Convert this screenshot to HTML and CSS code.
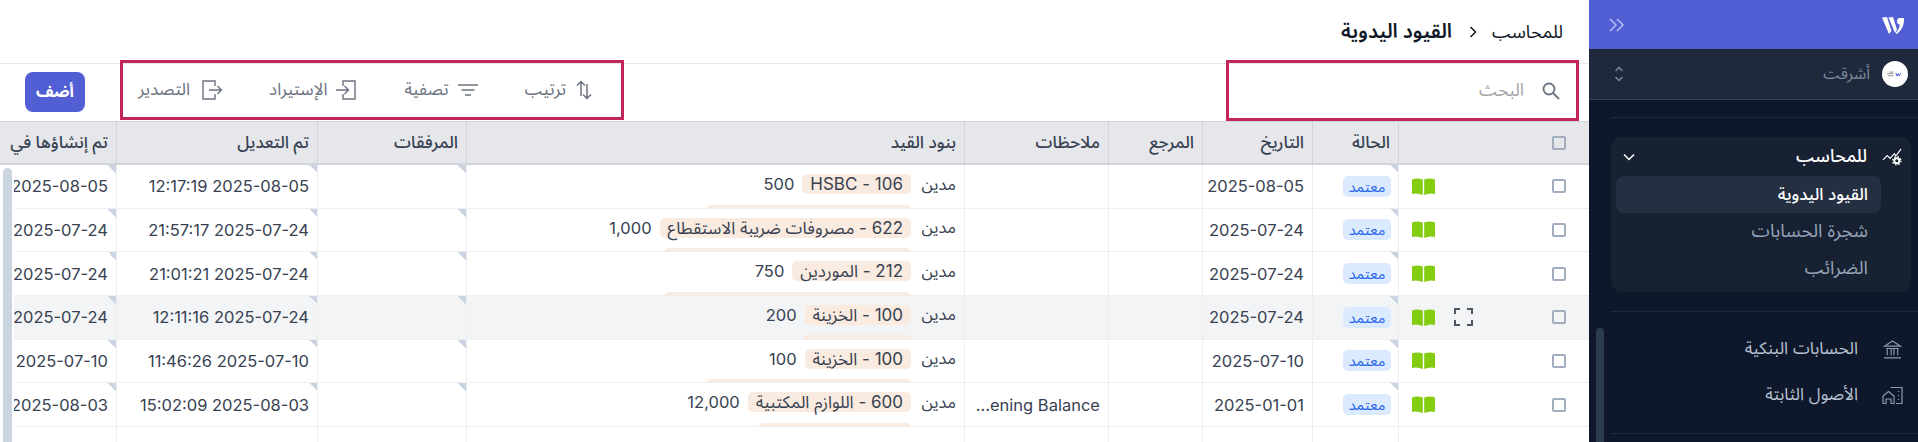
FILE: index.html
```html
<!DOCTYPE html>
<html lang="ar" dir="rtl">

<head>
    <meta charset="UTF-8">
    <title>القيود اليدوية</title>
    <link rel="stylesheet" href="styles.css">
</head>

<body>
    <div class="app">
        <aside class="sidebar">
            <div class="brand">
                <svg class="logo" viewBox="0 0 22 18"><path d="M0 1.500 5 1 9.500 15 7 18ZM6.500 1.500 11 1 15 13.500 13 17ZM15 5.500a3 3 0 0 1 3-3.500h4c.3 6-1.500 12-7.500 16l-1-1c2.500-2.500 4-5 4.300-8.500-1.500.4-2.500-1-2.800-3Z" fill="#fff"/></svg>
                <svg class="collapse" viewBox="0 0 16 14" fill="none" stroke="#b4bcf0" stroke-width="1.500"><path d="M1 1l6 6-6 6M8 1l6 6-6 6"/></svg>
            </div>
            <div class="company">
                <span class="avatar">
                    <svg viewBox="0 0 20 8"><path d="M0 3h8M1 5.500h7M3 1h5" stroke="#777" stroke-width="1" fill="none"/><path d="M11 2l1.500 4 1.500-3 1.500 3 1.500-4" stroke="#4f5bd5" stroke-width="1.200" fill="none"/></svg>
                </span>
                <span class="companyName">أشرقت</span>
                <svg class="updown" viewBox="0 0 10 16" fill="none" stroke="#7c8aa0" stroke-width="1.500"><path d="M1.500 5 5 1.500 8.500 5M1.500 11 5 14.500 8.500 11"/></svg>
            </div>
            <nav class="nav">
                <div class="sep"></div>
                <div class="group">
                    <div class="groupHead">
                        <svg class="navIcon" viewBox="0 0 22 18" fill="none" stroke="#fff" stroke-width="1.200"><path d="M1 12.500 5.500 8l3 3L13 6l1.500 2.500L20 1"/><circle cx="15.500" cy="13.500" r="2.600" stroke-width="2"/><circle cx="15.500" cy="13.500" r="4.300" stroke-width="1.400" stroke-dasharray="1.700 1.700"/></svg>
                        <span class="groupTitle">للمحاسب</span>
                        <svg class="groupArrow" viewBox="0 0 12 8" fill="none" stroke="#fff" stroke-width="1.500"><path d="M1 1.500 6 6.500 11 1.500"/></svg>
                    </div>
                    <a class="subItem active">القيود اليدوية</a>
                    <a class="subItem">شجرة الحسابات</a>
                    <a class="subItem">الضرائب</a>
                </div>
                <div class="sep sepMiddle"></div>
                <a class="navItem">
                    <svg class="navIcon" viewBox="0 0 20 20" fill="none" stroke="#8a9ab0" stroke-width="1.200"><path d="M1.500 6.500 10 1l8.500 5.500ZM3.500 9h13M4.500 9v7M8.500 9v7M11.500 9v7M15.500 9v7M1 18.800h18"/></svg>
                    <span>الحسابات البنكية</span>
                </a>
                <a class="navItem">
                    <svg class="navIcon" viewBox="0 0 21 18" fill="none" stroke="#8a9ab0" stroke-width="1.200"><path d="M1 17V9.500L6.500 5l5.500 4.500V17H9v-4.500H4V17ZM8.500 1H20v16h-6M16.500 4.500v1M16.500 8.500v1M16.500 12.500v1"/></svg>
                    <span>الأصول الثابتة</span>
                </a>
                <div class="sep sepLast"></div>
                <div class="navScroll"></div>
            </nav>
        </aside>

        <main class="main">
            <header class="topBar">
                <span class="crumb">للمحاسب</span>
                <svg class="crumbArrow" viewBox="0 0 8 12" fill="none" stroke="#111827" stroke-width="1.500"><path d="M1.500 1 6.500 6 1.500 11"/></svg>
                <span class="pageTitle">القيود اليدوية</span>
            </header>

            <div class="toolbar">
                <div class="search">
                    <svg class="searchIcon" viewBox="0 0 18 18" fill="none" stroke="#6b7280" stroke-width="1.800"><circle cx="7" cy="7" r="5.500"/><path d="M11 11l6 6"/></svg>
                    <span class="placeholder">البحث</span>
                </div>
                <div class="actions">
                    <a class="action sortAction">
                        <svg viewBox="0 0 16 20" fill="none" stroke="#6b7280" stroke-width="1.500" class="actionIcon"><path d="M5 16V2M1 5.500 5 1.500l4 4M11 4v14M7 14.500l4 4 4-4"/></svg>
                        <span>ترتيب</span>
                    </a>
                    <a class="action filterAction">
                        <svg viewBox="0 0 20 14" fill="none" stroke="#6b7280" stroke-width="1.700" class="actionIcon iconWide"><path d="M0 2h20M3.500 7h13M7 12h6"/></svg>
                        <span>تصفية</span>
                    </a>
                    <a class="action importAction">
                        <svg viewBox="0 0 20 20" fill="none" stroke="#6b7280" stroke-width="1.400" class="actionIcon iconWide"><path d="M7 6V1h12v18H7v-5M0 10h12M8.500 6l4 4-4 4"/></svg>
                        <span>الإستيراد</span>
                    </a>
                    <a class="action exportAction">
                        <svg viewBox="0 0 20 20" fill="none" stroke="#6b7280" stroke-width="1.400" class="actionIcon iconWide"><path d="M13 6V1H1v18h12v-5M7 10h12M15.500 6l4 4-4 4"/></svg>
                        <span>التصدير</span>
                    </a>
                </div>
                <button class="addButton">أضف</button>
            </div>

            <div class="tableWrap">
                <table class="entries">
                    <colgroup>
                        <col class="colCheck"><col class="colStatus"><col class="colDate"><col class="colRef"><col class="colNotes"><col class="colLines"><col class="colFiles"><col class="colModified"><col class="colCreated">
                    </colgroup>
                    <thead>
                        <tr>
                            <th><span class="check"></span></th>
                            <th>الحالة</th>
                            <th>التاريخ</th>
                            <th>المرجع</th>
                            <th>ملاحظات</th>
                            <th>بنود القيد</th>
                            <th>المرفقات</th>
                            <th>تم التعديل</th>
                            <th>تم إنشاؤها في</th>
                        </tr>
                    </thead>
                    <tbody>
                        <tr>
                            <td><div class="rowTools"><span class="check"></span><svg class="book" viewBox="0 0 23 17"><path d="M0 1.500Q5-.5 10.800 1.500V17Q5 14.500 0 16ZM12.200 1.500Q18-.5 23 1.500V16Q18 14.500 12.200 17Z"/></svg></div></td>
                            <td class="flag"><span class="status">معتمد</span></td>
                            <td>2025-08-05</td>
                            <td></td>
                            <td></td>
                            <td>
                                <div class="lines">
                                    <div class="line"><span class="side">مدين</span><span class="account">106 - HSBC</span><span>500</span></div>
                                    <div class="line"><span class="side"></span><span class="account cut205"></span></div>
                                </div>
                            </td>
                            <td class="flag"></td>
                            <td class="flag">2025-08-05 12:17:19</td>
                            <td class="flag">2025-08-05</td>
                        </tr>
                        <tr>
                            <td><div class="rowTools"><span class="check"></span><svg class="book" viewBox="0 0 23 17"><path d="M0 1.500Q5-.5 10.800 1.500V17Q5 14.500 0 16ZM12.200 1.500Q18-.5 23 1.500V16Q18 14.500 12.200 17Z"/></svg></div></td>
                            <td class="flag"><span class="status">معتمد</span></td>
                            <td>2025-07-24</td>
                            <td></td>
                            <td></td>
                            <td>
                                <div class="lines">
                                    <div class="line"><span class="side">مدين</span><span class="account">622 - مصروفات ضريبة الاستقطاع</span><span>1,000</span></div>
                                    <div class="line"><span class="side"></span><span class="account cut247"></span></div>
                                </div>
                            </td>
                            <td class="flag"></td>
                            <td class="flag">2025-07-24 21:57:17</td>
                            <td class="flag">2025-07-24</td>
                        </tr>
                        <tr>
                            <td><div class="rowTools"><span class="check"></span><svg class="book" viewBox="0 0 23 17"><path d="M0 1.500Q5-.5 10.800 1.500V17Q5 14.500 0 16ZM12.200 1.500Q18-.5 23 1.500V16Q18 14.500 12.200 17Z"/></svg></div></td>
                            <td class="flag"><span class="status">معتمد</span></td>
                            <td>2025-07-24</td>
                            <td></td>
                            <td></td>
                            <td>
                                <div class="lines">
                                    <div class="line"><span class="side">مدين</span><span class="account">212 - الموردين</span><span>750</span></div>
                                    <div class="line"><span class="side"></span><span class="account cut247"></span></div>
                                </div>
                            </td>
                            <td class="flag"></td>
                            <td class="flag">2025-07-24 21:01:21</td>
                            <td class="flag">2025-07-24</td>
                        </tr>
                        <tr class="hovered">
                            <td>
                                <div class="rowTools">
                                    <span class="check"></span>
                                    <svg class="expand" viewBox="0 0 19 18" fill="none" stroke="#4b5563" stroke-width="2"><path d="M1 6V1h5M13 1h5v5M18 12v5h-5M6 17H1v-5"/></svg>
                                    <svg class="book" viewBox="0 0 23 17"><path d="M0 1.500Q5-.5 10.800 1.500V17Q5 14.500 0 16ZM12.200 1.500Q18-.5 23 1.500V16Q18 14.500 12.200 17Z"/></svg>
                                </div>
                            </td>
                            <td class="flag"><span class="status">معتمد</span></td>
                            <td>2025-07-24</td>
                            <td></td>
                            <td></td>
                            <td>
                                <div class="lines">
                                    <div class="line"><span class="side">مدين</span><span class="account">100 - الخزينة</span><span>200</span></div>
                                    <div class="line"><span class="side"></span><span class="account cut108"></span></div>
                                </div>
                            </td>
                            <td class="flag"></td>
                            <td class="flag">2025-07-24 12:11:16</td>
                            <td class="flag">2025-07-24</td>
                        </tr>
                        <tr>
                            <td><div class="rowTools"><span class="check"></span><svg class="book" viewBox="0 0 23 17"><path d="M0 1.500Q5-.5 10.800 1.500V17Q5 14.500 0 16ZM12.200 1.500Q18-.5 23 1.500V16Q18 14.500 12.200 17Z"/></svg></div></td>
                            <td class="flag"><span class="status">معتمد</span></td>
                            <td>2025-07-10</td>
                            <td></td>
                            <td></td>
                            <td>
                                <div class="lines">
                                    <div class="line"><span class="side">مدين</span><span class="account">100 - الخزينة</span><span>100</span></div>
                                    <div class="line"><span class="side"></span><span class="account cut205"></span></div>
                                </div>
                            </td>
                            <td class="flag"></td>
                            <td class="flag">2025-07-10 11:46:26</td>
                            <td class="flag">2025-07-10</td>
                        </tr>
                        <tr>
                            <td><div class="rowTools"><span class="check"></span><svg class="book" viewBox="0 0 23 17"><path d="M0 1.500Q5-.5 10.800 1.500V17Q5 14.500 0 16ZM12.200 1.500Q18-.5 23 1.500V16Q18 14.500 12.200 17Z"/></svg></div></td>
                            <td class="flag"><span class="status">معتمد</span></td>
                            <td>2025-01-01</td>
                            <td></td>
                            <td><div class="note">Opening Balance</div></td>
                            <td>
                                <div class="lines">
                                    <div class="line"><span class="side">مدين</span><span class="account">600 - اللوازم المكتبية</span><span>12,000</span></div>
                                    <div class="line"><span class="side"></span><span class="account cut153"></span></div>
                                </div>
                            </td>
                            <td class="flag"></td>
                            <td class="flag">2025-08-03 15:02:09</td>
                            <td class="flag">2025-08-03</td>
                        </tr>
                        <tr>
                            <td></td><td></td><td></td><td></td><td></td><td></td><td></td><td></td><td></td>
                        </tr>
                    </tbody>
                </table>
                <div class="tableScroll"><div class="tableThumb"></div></div>
            </div>
        </main>
    </div>
</body>

</html>
```
FILE: styles.css
```css
* {
    box-sizing: border-box;
}

html,
body {
    margin: 0;
    height: 442px;
    overflow: hidden;
}

body {
    font-family: Inter, "Noto Sans Arabic", "Noto Sans", sans-serif;
    font-size: 16.500px;
    color: #374151;
    background: white;
}

.app {
    display: flex;
    height: 442px;
}

/* sidebar */
.sidebar {
    width: 329px;
    flex-shrink: 0;
    background: #0f172a;
    display: flex;
    flex-direction: column;
}

.brand {
    height: 49px;
    background: #525fd4;
    display: flex;
    align-items: center;
    justify-content: space-between;
    padding: 0 14px 0 20px;
}

.logo {
    width: 22px;
    height: 18px;
}

.collapse {
    width: 16px;
    height: 14px;
}

.company {
    height: 51px;
    background: #1e293b;
    border-bottom: 1px solid #334155;
    display: flex;
    align-items: center;
    padding: 0 10px 0 25px;
    gap: 12px;
}

.avatar {
    width: 26px;
    height: 26px;
    border-radius: 50%;
    background: white;
    display: flex;
    align-items: center;
    justify-content: center;
}

.avatar svg {
    width: 16px;
    height: 7px;
}

.companyName {
    flex: 1;
    color: #7c8aa0;
    font-size: 16px;
}

.updown {
    width: 10px;
    height: 16px;
}

.nav {
    position: relative;
    flex: 1;
    overflow: hidden;
}

.sep {
    height: 1px;
    background: #1e293b;
    margin: 17px 0 19px 0;
    margin-left: 22px;
}

.sepMiddle {
    margin-top: 19px;
    margin-bottom: 14px;
}

.sepLast {
    margin-top: 15px;
}

.group {
    margin: 0 7px 0 22px;
    background: #172132;
    border-radius: 10px;
    padding-bottom: 5px;
}

.groupHead {
    height: 39px;
    display: flex;
    align-items: center;
    padding: 0 8px 0 0;
    gap: 15px;
    color: white;
}

.navIcon {
    width: 21px;
    height: 19px;
    flex-shrink: 0;
}

.groupTitle {
    flex: 1;
    font-size: 17.500px;
    font-weight: 500;
}

.groupArrow {
    width: 12px;
    height: 8px;
    margin-left: 12px;
}

.subItem {
    display: flex;
    align-items: center;
    height: 37px;
    margin: 0 30px 0 5px;
    padding: 0 13px;
    border-radius: 8px;
    color: #94a3b8;
    font-size: 18.500px;
}

.subItem.active {
    background: #252f42;
    color: white;
    font-size: 16.800px;
    font-weight: 500;
}

.navItem {
    display: flex;
    align-items: center;
    height: 46px;
    padding-right: 15px;
    gap: 24px;
    color: #b6c2d1;
    font-size: 17px;
}

.navScroll {
    position: absolute;
    left: 7px;
    top: 228px;
    bottom: 0;
    width: 8px;
    border-radius: 4px 4px 0 0;
    background: #2c3c50;
}

/* main */
.main {
    flex: 1;
    min-width: 0;
    display: flex;
    flex-direction: column;
}

.topBar {
    height: 64px;
    border-bottom: 1px solid #e5e7eb;
    display: flex;
    align-items: center;
    padding: 0 26px;
    gap: 15px;
    color: #111827;
}

.crumb {
    font-size: 18px;
}

.crumbArrow {
    width: 8px;
    height: 12px;
}

.pageTitle {
    font-size: 20px;
    font-weight: 600;
    margin-right: 2px;
}

.toolbar {
    height: 57px;
    display: flex;
    align-items: flex-start;
}

.search {
    width: 353px;
    height: 61px;
    margin: -4px 10px 0 0;
    border: 3px solid #c2255c;
    display: flex;
    align-items: center;
    padding: 0 16px;
    gap: 18px;
}

.searchIcon {
    width: 18px;
    height: 18px;
}

.placeholder {
    color: #a3a3a3;
    font-size: 17.500px;
}

.actions {
    width: 504px;
    height: 60px;
    margin: -4px 602px 0 0;
    border: 3px solid #c2255c;
    display: flex;
    align-items: center;
    padding-right: 28px;
    color: #6b7280;
    font-size: 17px;
}

.action {
    display: flex;
    align-items: center;
    gap: 9px;
}

.filterAction {
    margin-right: 47px;
}

.importAction {
    margin-right: 48px;
}

.exportAction {
    margin-right: 47px;
    gap: 12px;
}

.actionIcon {
    width: 18px;
    height: 20px;
}

.iconWide {
    width: 20px;
}

.addButton {
    width: 60px;
    height: 40px;
    margin: 8px auto 0 25px;
    background: #525fd4;
    color: white;
    border: none;
    border-radius: 8px;
    font: inherit;
    font-size: 16px;
    font-weight: 700;
}

/* table */
.tableWrap {
    position: relative;
    flex: 1;
    overflow: hidden;
}

.entries {
    table-layout: fixed;
    width: 1603px;
    border-collapse: separate;
    border-spacing: 0;
}

.colCheck { width: 191px; }
.colStatus { width: 86px; }
.colDate { width: 110px; }
.colRef { width: 94px; }
.colNotes { width: 144px; }
.colLines { width: 498px; }
.colFiles { width: 149px; }
.colModified { width: 201px; }
.colCreated { width: 130px; }

th {
    height: 44px;
    background: #e5e7eb;
    border-top: 1px solid #d1d5db;
    border-left: 1px solid #d1d5db;
    border-bottom: 2px solid #d1d5db;
    padding: 0 8px;
    text-align: right;
    font-size: 17px;
    font-weight: 500;
    white-space: nowrap;
}

td {
    height: 43.670px;
    border-left: 1px solid #eceef1;
    border-bottom: 1px solid #eceef1;
    padding: 0 8px;
    text-align: right;
    white-space: nowrap;
    background-color: white;
}

th:first-child,
td:first-child {
    padding-right: 23px;
}

tr.hovered td {
    background-color: #f3f4f6;
}

.flag {
    background-image: linear-gradient(225deg, #cbd5e1 50%, transparent 50%);
    background-size: 8px 8px;
    background-position: top right;
    background-repeat: no-repeat;
}

.check {
    display: block;
    width: 14px;
    height: 14px;
    border: 2px solid #a0aec0;
    border-radius: 2px;
}

.rowTools {
    display: flex;
    align-items: center;
}

.expand {
    width: 19px;
    height: 18px;
    margin-right: 79px;
}

.book {
    width: 23px;
    height: 17px;
    fill: #84cc0f;
    margin-right: auto;
    margin-left: 5px;
}

.status {
    display: inline-block;
    width: 48px;
    height: 21px;
    margin-right: -1px;
    line-height: 21px;
    text-align: center;
    border-radius: 5px;
    background: #dbeafe;
    color: #2563eb;
    font-size: 14.500px;
}

.lines {
    height: 42.670px;
    padding-top: 9px;
    overflow: hidden;
}

.line {
    display: flex;
    align-items: center;
    gap: 8px;
    height: 20px;
    margin-bottom: 10.500px;
}

.side {
    width: 37px;
}

.account {
    background: #faebe0;
    border-radius: 5px;
    height: 20px;
    line-height: 20px;
    padding: 0 8px;
    font-size: 17px;
}

/* second line of an entry, only its top edge shows above the row border */
.cut108 { width: 108px; }
.cut153 { width: 153px; }
.cut205 { width: 205px; }
.cut247 { width: 247px; }

.note {
    overflow: hidden;
    text-overflow: ellipsis;
}

.tableScroll {
    position: absolute;
    left: 0;
    top: 44px;
    bottom: 0;
    width: 14px;
    background: white;
    padding: 3px 2px 0 3px;
}

.tableThumb {
    height: 100%;
    border-radius: 5px 5px 0 0;
    background: #cbd5e1;
}
```
